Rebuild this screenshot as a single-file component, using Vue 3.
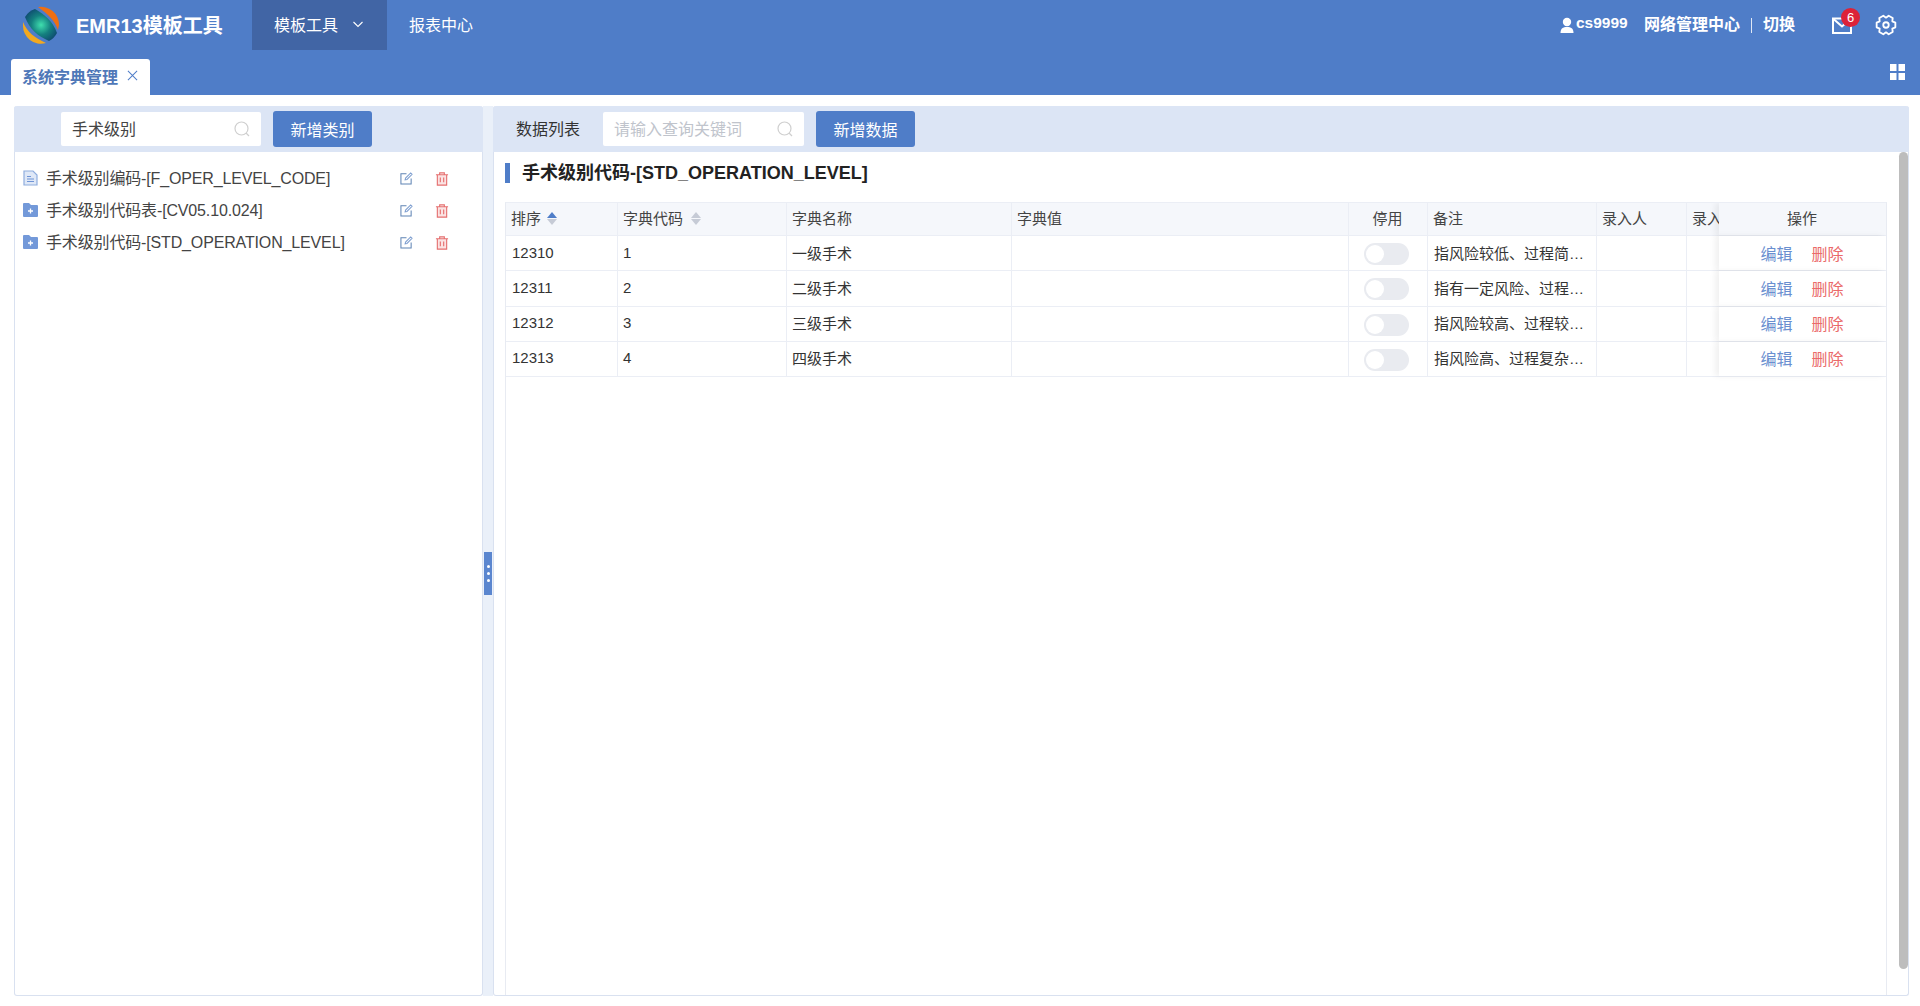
<script setup>
const treeItems = [
  { label: '手术级别编码-[F_OPER_LEVEL_CODE]', type: 'doc' },
  { label: '手术级别代码表-[CV05.10.024]', type: 'folder' },
  { label: '手术级别代码-[STD_OPERATION_LEVEL]', type: 'folder' },
]
const rows = [
  { sort: '12310', code: '1', name: '一级手术', note: '指风险较低、过程简单、技术难度低的手术' },
  { sort: '12311', code: '2', name: '二级手术', note: '指有一定风险、过程复杂程度一般的手术' },
  { sort: '12312', code: '3', name: '三级手术', note: '指风险较高、过程较复杂、难度较大的手术' },
  { sort: '12313', code: '4', name: '四级手术', note: '指风险高、过程复杂、难度大的重大手术' },
]
</script>

<template>
  <div class="page">
    <header class="topbar">
      <svg class="logo" viewBox="0 0 38 38" width="38" height="38">
        <defs>
          <radialGradient id="lg" cx="50%" cy="50%" r="55%">
            <stop offset="0" stop-color="#3fdfae" />
            <stop offset="0.55" stop-color="#14807f" />
            <stop offset="1" stop-color="#0f4f72" />
          </radialGradient>
        </defs>
        <path d="M16 1 A18 18 0 0 1 37 19 L36 24 C33 15 26 8 16 1 Z" fill="#ef6f12" />
        <path d="M1 16 C5 26 13 32 24 37 A18 18 0 0 1 1 19 Z" fill="#f3a91f" />
        <path d="M3 11 A18 18 0 0 1 13 3 C22 8 31 15 35 27 A18 18 0 0 1 27 35 C16 30 8 24 3 11 Z" fill="url(#lg)" />
      </svg>
      <div class="brand">EMR13模板工具</div>
      <nav class="nav">
        <div class="nav-item active">
          模板工具
          <svg class="chev" viewBox="0 0 12 12" width="12" height="12"><path d="M1.5 4 L6 8.5 L10.5 4" fill="none" stroke="#fff" stroke-width="1.1" /></svg>
        </div>
        <div class="nav-item">报表中心</div>
      </nav>
      <div class="top-right">
        <svg class="user" viewBox="0 0 14 16" width="14" height="16">
          <circle cx="7" cy="5" r="4.2" fill="#fff" />
          <path d="M0.5 16 C0.5 11.5 3 10 7 10 C11 10 13.5 11.5 13.5 16 Z" fill="#fff" />
        </svg>
        <span class="uname">cs9999</span>
        <span class="org">网络管理中心</span>
        <span class="sep"></span>
        <span class="org">切换</span>
        <div class="mail">
          <svg viewBox="0 0 20 17" width="20" height="17">
            <path d="M1 1.5 H19 V16 H1 Z" fill="none" stroke="#fff" stroke-width="2" />
            <path d="M1.5 2 L10 9.5 L18.5 2" fill="none" stroke="#fff" stroke-width="2" />
          </svg>
          <span class="badge">6</span>
        </div>
        <svg class="gear" viewBox="0 0 24 24" width="22" height="22">
          <polygon points="22.2,9.5 22.2,14.5 18.9,16 19.3,19.6 14.9,22.1 12,20 9.1,22.1 4.7,19.6 5.1,16 1.8,14.5 1.8,9.5 5.1,8 4.7,4.4 9.1,1.9 12,4 14.9,1.9 19.3,4.4 18.9,8" fill="none" stroke="#fff" stroke-width="2" stroke-linejoin="round" />
          <circle cx="12" cy="12" r="3" fill="none" stroke="#fff" stroke-width="2" />
        </svg>
      </div>
    </header>

    <div class="tabbar">
      <div class="tab">
        <span class="tab-text">系统字典管理</span>
        <svg viewBox="0 0 12 12" width="11" height="11"><path d="M1 1 L11 11 M11 1 L1 11" stroke="#4f7dc8" stroke-width="1.1" /></svg>
      </div>
      <svg class="grid-ico" viewBox="0 0 15 16" width="15" height="16">
        <rect x="0" y="0" width="6.5" height="7" fill="#fff" />
        <rect x="8.5" y="0" width="6.5" height="7" fill="#fff" />
        <rect x="0" y="9" width="6.5" height="7" fill="#fff" />
        <rect x="8.5" y="9" width="6.5" height="7" fill="#fff" />
      </svg>
    </div>

    <main class="content">
      <section class="panel left">
        <div class="panel-head left-head">
          <div class="search">
            <span class="search-val">手术级别</span>
            <svg class="s-ico" viewBox="0 0 16 16" width="16" height="16"><circle cx="7.5" cy="7.5" r="6.5" fill="none" stroke="#cfcfcf" stroke-width="1.2" /><path d="M12 12 L15 15" stroke="#cfcfcf" stroke-width="1.2" /></svg>
          </div>
          <button class="btn">新增类别</button>
        </div>
        <ul class="tree">
          <li v-for="item in treeItems" :key="item.label" class="tree-row">
            <svg v-if="item.type === 'doc'" class="t-ico" viewBox="0 0 15 16" width="15" height="16">
              <path d="M1 1 H10 L14 5 V15 H1 Z" fill="#dfe8f7" stroke="#8fadde" stroke-width="1.2" />
              <path d="M4 6.5 H8 M4 9 H11 M4 11.5 H11" stroke="#6f94d6" stroke-width="1.2" />
            </svg>
            <svg v-else class="t-ico" viewBox="0 0 15 14" width="15" height="14">
              <path d="M0 1 Q0 0 1 0 H6 L8 2 H14 Q15 2 15 3 V13 Q15 14 14 14 H1 Q0 14 0 13 Z" fill="#7399d9" />
              <path d="M5 8 H10 M7.5 5.5 V10.5" stroke="#fff" stroke-width="1.3" />
            </svg>
            <span class="t-label">{{ item.label }}</span>
            <svg class="t-edit" viewBox="0 0 14 14" width="13" height="13">
              <path d="M7 2 H1 V13 H12 V7" fill="none" stroke="#5f84b4" stroke-width="1.1" />
              <path d="M5.5 8.5 L6 6.5 L11.5 1 L13 2.5 L7.5 8 Z" fill="none" stroke="#7f9fd0" stroke-width="1.1" />
            </svg>
            <svg class="t-del" viewBox="0 0 14 15" width="14" height="14">
              <path d="M2 3 H12 V14 H2 Z" fill="#fbe3e3" />
              <path d="M0.5 3 H13.5 M4.5 3 V1 H9.5 V3 M2 3 V14 H12 V3 M5.2 6 V11 M8.8 6 V11" fill="none" stroke="#e56f6f" stroke-width="1.2" />
            </svg>
          </li>
        </ul>
      </section>

      <div class="splitter">
        <div class="handle"><i></i><i></i><i></i></div>
      </div>

      <section class="panel right">
        <div class="panel-head right-head">
          <span class="head-label">数据列表</span>
          <div class="search search-r">
            <span class="search-ph">请输入查询关键词</span>
            <svg class="s-ico" viewBox="0 0 16 16" width="16" height="16"><circle cx="7.5" cy="7.5" r="6.5" fill="none" stroke="#cfcfcf" stroke-width="1.2" /><path d="M12 12 L15 15" stroke="#cfcfcf" stroke-width="1.2" /></svg>
          </div>
          <button class="btn">新增数据</button>
        </div>
        <div class="right-body">
          <div class="title"><span class="title-bar"></span>手术级别代码-[STD_OPERATION_LEVEL]</div>
          <div class="table">
            <div class="tr th">
              <div class="td">排序<span class="sorter"><b class="up on"></b><b class="down"></b></span></div>
              <div class="td">字典代码<span class="sorter s2"><b class="up"></b><b class="down"></b></span></div>
              <div class="td">字典名称</div>
              <div class="td">字典值</div>
              <div class="td center">停用</div>
              <div class="td">备注</div>
              <div class="td">录入人</div>
              <div class="td clip">录入时间</div>
              <div class="td fixed center">操作</div>
            </div>
            <div v-for="r in rows" :key="r.sort" class="tr">
              <div class="td first">{{ r.sort }}</div>
              <div class="td">{{ r.code }}</div>
              <div class="td">{{ r.name }}</div>
              <div class="td"></div>
              <div class="td center"><span class="switch"><i></i></span></div>
              <div class="td note"><span class="ell">{{ r.note }}</span></div>
              <div class="td"></div>
              <div class="td clip"></div>
              <div class="td fixed center ops">
                <a class="edit">编辑</a>
                <a class="del">删除</a>
              </div>
            </div>
          </div>
          <div class="thumb"></div>
        </div>
      </section>
    </main>
  </div>
</template>

<style>
html, body { margin: 0; padding: 0; overflow: hidden; background: #fff; }
</style>

<style scoped>
* { box-sizing: border-box; }
.page {
  height: 100vh;
  display: flex;
  flex-direction: column;
  font-family: "Liberation Sans", "Noto Sans CJK SC", sans-serif;
  color: #333;
  background: #fff;
}
.topbar {
  height: 50px;
  background: #4f7dc8;
  display: flex;
  align-items: center;
  padding-left: 22px;
  color: #fff;
  flex: none;
}
.logo { flex: none; }
.brand { margin-left: 16px; font-size: 20px; font-weight: 700; width: 176px; white-space: nowrap; padding-bottom: 2px; }
.nav { display: flex; height: 50px; }
.nav-item {
  display: flex;
  align-items: center;
  font-size: 16px;
  padding: 0 22px 2px;
}
.nav-item.active { background: #4165a5; width: 135px; padding: 0 0 2px 22px; }
.chev { margin-left: 14px; }
.top-right { margin-left: auto; display: flex; align-items: center; padding-right: 23px; height: 50px; }
.user { margin-right: 2px; }
.uname { font-size: 15.5px; font-weight: 700; width: 68px; padding-bottom: 4px; }
.org { font-size: 16px; font-weight: 700; padding-bottom: 4px; }
.sep { width: 1px; height: 15px; background: #dfe7f5; margin: 0 11px; }
.mail { position: relative; margin-left: 37px; width: 20px; height: 17px; display: flex; }
.badge {
  position: absolute;
  left: 9px;
  top: -9px;
  width: 19px;
  height: 19px;
  border-radius: 50%;
  background: #dc2238;
  color: #fff;
  font-size: 13px;
  line-height: 19px;
  text-align: center;
}
.gear { margin-left: 23px; }
.tabbar {
  height: 45px;
  flex: none;
  background: #4f7dc8;
  display: flex;
  align-items: flex-end;
  justify-content: space-between;
  padding: 0 15px 0 11px;
}
.tab {
  height: 36px;
  width: 139px;
  background: #fff;
  border-radius: 3px 3px 0 0;
  display: flex;
  align-items: center;
  padding: 0 0 3px 11px;
  gap: 9px;
}
.tab-text { font-size: 16px; font-weight: 700; color: #4f78b8; white-space: nowrap; }
.grid-ico { align-self: flex-start; margin-top: 14px; }
.content {
  flex: 1;
  min-height: 0;
  display: flex;
  padding: 11px 11px 10px 14px;
}
.panel {
  display: flex;
  flex-direction: column;
  border: 1px solid #d9e1f0;
  border-top: none;
  border-radius: 3px;
  background: #fff;
}
.left { width: 469px; flex: none; }
.right { flex: 1; min-width: 0; }
.panel-head {
  height: 46px;
  flex: none;
  background: #dce5f5;
  display: flex;
  align-items: center;
  margin: 0 -1px;
  border-radius: 3px 3px 0 0;
}
.left-head { padding-left: 47px; }
.right-head { padding-left: 23px; }
.head-label { font-size: 16px; width: 87px; color: #333; padding-bottom: 2px; }
.search {
  width: 200px;
  height: 34px;
  background: #fff;
  border-radius: 2px;
  display: flex;
  align-items: center;
  justify-content: space-between;
  padding: 0 11px 0 11px;
  font-size: 16px;
  margin-right: 12px;
}
.search-r { width: 201px; }
.search-ph { color: #c0c4cc; white-space: nowrap; padding-bottom: 2px; }
.search-val { color: #444; padding-bottom: 2px; }
.btn {
  width: 99px;
  height: 36px;
  background: #4f7dc8;
  color: #fff;
  border: none;
  border-radius: 3px;
  font: inherit;
  font-size: 16px;
  padding: 0;
}
.tree { list-style: none; margin: 0; padding: 10px 0 0; }
.tree-row {
  height: 32px;
  display: flex;
  align-items: center;
  padding-left: 8px;
  position: relative;
}
.t-ico { flex: none; }
.t-label { margin-left: 8px; font-size: 16px; color: #444; width: 354px; white-space: nowrap; letter-spacing: -0.15px; padding-bottom: 2px; }
.t-edit { flex: none; margin-top: 1px; }
.t-del { flex: none; margin-left: 22px; margin-top: 1px; }
.splitter {
  width: 10px;
  flex: none;
  background: #eaf0f9;
  display: flex;
  align-items: center;
  justify-content: center;
}
.handle {
  width: 8px;
  height: 43px;
  background: #5b86cf;
  display: flex;
  flex-direction: column;
  align-items: center;
  justify-content: center;
  gap: 4px;
  margin-top: 45px;
}
.handle i { width: 3px; height: 3px; border-radius: 50%; background: #fff; }
.right-body { flex: 1; min-height: 0; display: flex; flex-direction: column; padding-left: 11px; position: relative; }
.title {
  height: 50px;
  flex: none;
  display: flex;
  align-items: flex-start;
  font-size: 18px;
  font-weight: 700;
  line-height: 20px;
  padding-top: 11px;
  color: #222;
}
.title-bar { width: 5px; height: 20px; background: #4f7dc8; margin-right: 12px; }
.table {
  flex: 1;
  min-height: 0;
  width: 1382px;
  border-left: 1px solid #e8ebf2;
  border-right: 1px solid #e8ebf2;
  border-top: 1px solid #ebeef5;
  font-size: 15px;
  overflow: hidden;
}
.tr {
  display: grid;
  grid-template-columns: 112px 169px 225px 337px 79px 169px 90px 32px 167px;
  height: 35.25px;
  border-bottom: 1px solid #ebeef5;
}
.th { height: 33px; background: #f5f7fb; color: #444; }
.td {
  border-right: 1px solid #ebeef5;
  padding: 0 6px 2px 5px;
  display: flex;
  align-items: center;
  white-space: nowrap;
  overflow: hidden;
  min-width: 0;
}
.td.first { padding-left: 6px; }
.th .td { padding-bottom: 4px; }
.center { justify-content: center; }
.clip { border-right: none; padding-right: 0; }
.fixed {
  border-right: none;
  background: #fff;
  box-shadow: -4px 0 6px rgba(0, 0, 0, 0.06);
  position: relative;
  overflow: visible;
}
.th .fixed { background: #f5f7fb; }
.sorter {
  position: relative;
  display: inline-flex;
  flex-direction: column;
  gap: 1px;
  margin-left: 6px;
  margin-top: 2px;
}
.sorter.s2 { margin-left: 8px; }
.sorter b { width: 0; height: 0; border-left: 5.5px solid transparent; border-right: 5.5px solid transparent; display: block; }
.sorter .up { border-bottom: 6px solid #c6cbd6; }
.sorter .down { border-top: 6px solid #c6cbd6; }
.sorter .up.on { border-bottom-color: #4f7dc8; }
.switch {
  width: 45px;
  height: 22px;
  border-radius: 11px;
  background: #e9ebf0;
  display: flex;
  align-items: center;
  padding-left: 2px;
  margin: 4px 2px 0 0;
}
.switch i { width: 18px; height: 18px; border-radius: 50%; background: #fff; }
.td.note { padding: 0 8px 2px 6px; }
.ell { display: block; overflow: hidden; text-overflow: ellipsis; white-space: nowrap; }
.td.ops { gap: 19px; font-size: 16px; padding-bottom: 1px; }
.edit { color: #6a8fd0; }
.del { color: #ea6a6a; }
.thumb {
  position: absolute;
  right: 0;
  top: 0;
  width: 9px;
  height: 817px;
  background: #bdbdbd;
  border-radius: 5px;
}
</style>
